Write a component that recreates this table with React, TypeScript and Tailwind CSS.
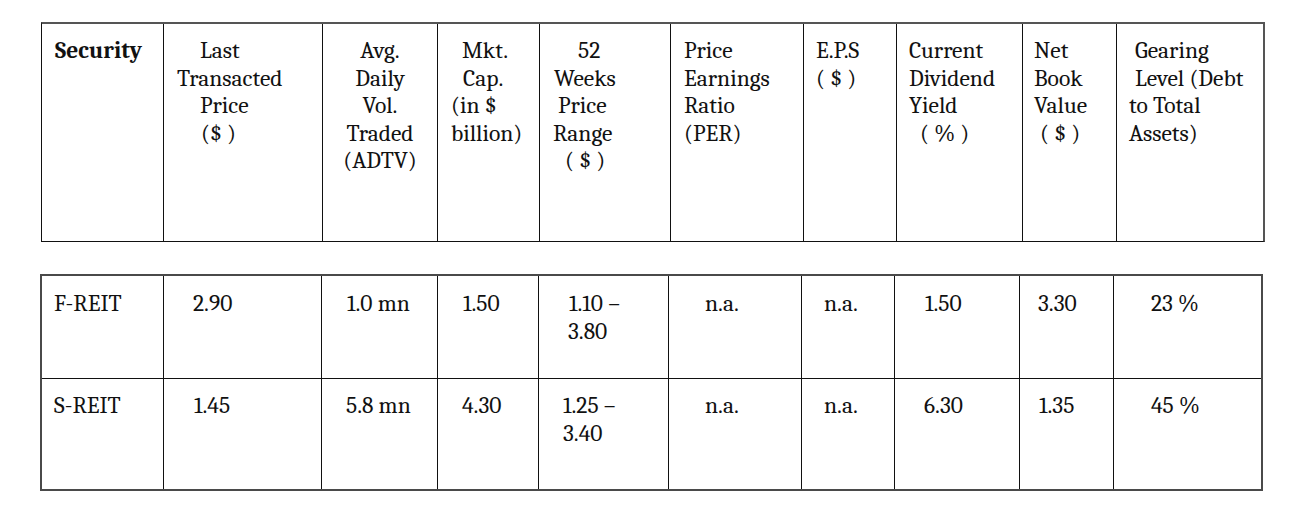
import * as React from 'react'

interface Line {
  t: string
  cls: string
}

interface HeaderCell {
  lines: Line[]
  bold?: boolean
  center?: boolean
}

const HEADER: HeaderCell[] = [
  { bold: true, lines: [{ t: 'Security', cls: 'pl-[13px]' }] },
  {
    lines: [
      { t: 'Last', cls: 'pl-[36px]' },
      { t: 'Transacted', cls: 'pl-[13px]' },
      { t: 'Price', cls: 'pl-[36px]' },
      { t: '($ )', cls: 'pl-[37px]' },
    ],
  },
  {
    center: true,
    lines: [
      { t: 'Avg.', cls: '' },
      { t: 'Daily', cls: '' },
      { t: 'Vol.', cls: '' },
      { t: 'Traded', cls: '' },
      { t: '(ADTV)', cls: '' },
    ],
  },
  {
    lines: [
      { t: 'Mkt.', cls: 'pl-[24px]' },
      { t: 'Cap.', cls: 'pl-[25px]' },
      { t: '(in $', cls: 'pl-[13px]' },
      { t: 'billion)', cls: 'pl-[13px]' },
    ],
  },
  {
    lines: [
      { t: '52', cls: 'pl-[38px]' },
      { t: 'Weeks', cls: 'pl-[14px]' },
      { t: 'Price', cls: 'pl-[18px]' },
      { t: 'Range', cls: 'pl-[13px]' },
      { t: '( $ )', cls: 'pl-[25px]' },
    ],
  },
  {
    lines: [
      { t: 'Price', cls: 'pl-[13px]' },
      { t: 'Earnings', cls: 'pl-[13px]' },
      { t: 'Ratio', cls: 'pl-[13px]' },
      { t: '(PER)', cls: 'pl-[13px]' },
    ],
  },
  {
    lines: [
      { t: 'E.P.S', cls: 'pl-[12px]' },
      { t: '( $ )', cls: 'pl-[12px]' },
    ],
  },
  {
    lines: [
      { t: 'Current', cls: 'pl-[12px]' },
      { t: 'Dividend', cls: 'pl-[12px]' },
      { t: 'Yield', cls: 'pl-[12px]' },
      { t: '( % )', cls: 'pl-[23px]' },
    ],
  },
  {
    lines: [
      { t: 'Net', cls: 'pl-[11px]' },
      { t: 'Book', cls: 'pl-[11px]' },
      { t: 'Value', cls: 'pl-[11px]' },
      { t: '( $ )', cls: 'pl-[17px]' },
    ],
  },
  {
    lines: [
      { t: 'Gearing', cls: 'pl-[18px]' },
      { t: 'Level (Debt', cls: 'pl-[18px]' },
      { t: 'to Total', cls: 'pl-[12px]' },
      { t: 'Assets)', cls: 'pl-[12px]' },
    ],
  },
]

const ROWS: Line[][][] = [
  [
    [{ t: 'F-REIT', cls: 'pl-[12px]' }],
    [{ t: '2.90', cls: 'pl-[29px]' }],
    [{ t: '1.0 mn', cls: 'pl-[25px]' }],
    [{ t: '1.50', cls: 'pl-[25px]' }],
    [
      { t: '1.10 –', cls: 'pl-[30px]' },
      { t: '3.80', cls: 'pl-[29px]' },
    ],
    [{ t: 'n.a.', cls: 'pl-[36px]' }],
    [{ t: 'n.a.', cls: 'pl-[22px]' }],
    [{ t: '1.50', cls: 'pl-[30px]' }],
    [{ t: '3.30', cls: 'pl-[18px]' }],
    [{ t: '23 %', cls: 'pl-[37px]' }],
  ],
  [
    [{ t: 'S-REIT', cls: 'pl-[12px]' }],
    [{ t: '1.45', cls: 'pl-[30px]' }],
    [{ t: '5.8 mn', cls: 'pl-[24px]' }],
    [{ t: '4.30', cls: 'pl-[24px]' }],
    [
      { t: '1.25 –', cls: 'pl-[24px]' },
      { t: '3.40', cls: 'pl-[24px]' },
    ],
    [{ t: 'n.a.', cls: 'pl-[36px]' }],
    [{ t: 'n.a.', cls: 'pl-[22px]' }],
    [{ t: '6.30', cls: 'pl-[29px]' }],
    [{ t: '1.35', cls: 'pl-[19px]' }],
    [{ t: '45 %', cls: 'pl-[37px]' }],
  ],
]

function CellLines({ lines, center }: { lines: Line[]; center?: boolean }) {
  return (
    <>
      {lines.map((line, i) => (
        <div key={i} className={`whitespace-pre ${center ? 'text-center' : line.cls}`}>
          {line.t}
        </div>
      ))}
    </>
  )
}

export default function App() {
  return (
    <div className="min-h-screen bg-white pt-[22px] pl-[40px] text-[23.5px] leading-[27.5px] text-[#111] font-serif [font-family:Liberation_Serif,serif]">
      {/* header table */}
      <div className="ml-[1px] w-[1224px] h-[220px] grid grid-cols-[121px_159px_115px_102px_131px_133px_93px_126px_94px_147px] border-t-2 border-r-2 border-t-[#555] border-r-[#555] border-l border-l-[#111] border-b border-b-[#111]">
        {HEADER.map((cell, i) => (
          <div
            key={i}
            className={`pt-[13px] ${i > 0 ? 'border-l border-[#111]' : ''} ${cell.bold ? 'font-bold' : ''}`}
          >
            <CellLines lines={cell.lines} center={cell.center} />
          </div>
        ))}
      </div>

      {/* data table */}
      <div className="mt-[32px] w-[1223px] border-2 border-[#4a4a4a]">
        {ROWS.map((row, r) => (
          <div
            key={r}
            className={`grid grid-cols-[121px_158px_116px_101px_130px_133px_93px_125px_94px_148px] ${
              r === 0 ? 'h-[102px]' : 'h-[111px] border-t border-[#111]'
            }`}
          >
            {row.map((cell, c) => (
              <div
                key={c}
                className={`${r === 0 ? 'pt-[14px]' : 'pt-[13px]'} ${c > 0 ? 'border-l border-[#111]' : ''}`}
              >
                <CellLines lines={cell} />
              </div>
            ))}
          </div>
        ))}
      </div>
    </div>
  )
}
